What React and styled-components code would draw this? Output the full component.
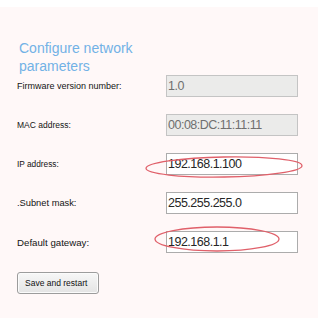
import { Fragment } from "react";
import styled, { createGlobalStyle } from "styled-components";

const GlobalStyle = createGlobalStyle`
  html, body {
    margin: 0;
    padding: 0;
    background: #fff8f8;
  }
  * {
    box-sizing: border-box;
  }
`;

const Page = styled.div`
  min-height: 100vh;
  border-top: 7px solid #ffffff;
  background: #fff8f8;
  padding: 32px 0 0 17px;
  font-family: "Liberation Sans", Arial, sans-serif;
`;

const Title = styled.h2`
  margin: 0 0 0 2px;
  width: 140px;
  font-size: 14px;
  line-height: 18px;
  font-weight: normal;
  color: #72b2e6;
`;

const Form = styled.form`
  display: grid;
  grid-template-columns: 149px 132px;
  grid-auto-rows: 22px;
  row-gap: 17px;
  align-items: center;
`;

const Label = styled.label`
  font-size: ${(props) => props.size}px;
  color: #141414;
  white-space: nowrap;
`;

const Cell = styled.div`
  position: relative;
  height: 22px;
`;

const Input = styled.input`
  width: 132px;
  height: 22px;
  margin: 0;
  padding: 0 1px;
  font-family: "Liberation Sans", Arial, sans-serif;
  font-size: 12.5px;
  letter-spacing: -0.5px;
  border: 1px solid ${(props) => (props.disabled ? "#c4c4c4" : "#acacac")};
  background: ${(props) => (props.disabled ? "#ebebea" : "#ffffff")};
  color: ${(props) => (props.disabled ? "#6f6f6f" : "#262626")};
  outline: none;
  -webkit-text-fill-color: ${(props) => (props.disabled ? "#6f6f6f" : "#262626")};
  opacity: 1;
`;

const Mark = styled.svg`
  position: absolute;
  left: ${(props) => props.x}px;
  top: ${(props) => props.y}px;
  overflow: visible;
  pointer-events: none;
`;

const Button = styled.button`
  margin-top: 19px;
  width: 82px;
  height: 22px;
  padding: 0 0 0 7px;
  text-align: left;
  font-family: "Liberation Sans", Arial, sans-serif;
  font-size: 8.5px;
  color: #111;
  background: linear-gradient(#f7f7f7, #e4e4e4);
  border: 1px solid #9c9c9c;
  border-radius: 3px;
  box-shadow: inset 0 0 0 1px #fbfbfb;
`;

const Ring = ({ x, y, w, h, tilt = 0 }) => (
  <Mark x={x} y={y} width={w} height={h} viewBox={`0 0 ${w} ${h}`}>
    <ellipse
      cx={w / 2}
      cy={h / 2}
      rx={w / 2 - 1}
      ry={h / 2 - 1}
      fill="none"
      stroke="#e0606a"
      strokeWidth="1.3"
      transform={`rotate(${tilt} ${w / 2} ${h / 2})`}
    />
  </Mark>
);

const rows = [
  { label: "Firmware version number:", size: 9, value: "1.0", disabled: true },
  { label: "MAC address:", size: 8.5, value: "00:08:DC:11:11:11", disabled: true },
  { label: "IP address:", size: 8.3, value: "192.168.1.100", ring: { x: -21, y: 3, w: 158, h: 22, tilt: -1 } },
  { label: ".Subnet mask:", size: 9.3, value: "255.255.255.0" },
  { label: "Default gateway:", size: 9.7, value: "192.168.1.1", ring: { x: -12, y: -5, w: 126, h: 26, tilt: 0 } },
];

export default function App() {
  return (
    <>
      <GlobalStyle />
      <Page>
        <Title>Configure network parameters</Title>
        <Form onSubmit={(e) => e.preventDefault()}>
          {rows.map((row) => (
            <Fragment key={row.label}>
              <Label size={row.size}>{row.label}</Label>
              <Cell>
                <Input defaultValue={row.value} disabled={row.disabled} />
                {row.ring && <Ring {...row.ring} />}
              </Cell>
            </Fragment>
          ))}
        </Form>
        <Button type="button">Save and restart</Button>
      </Page>
    </>
  );
}
